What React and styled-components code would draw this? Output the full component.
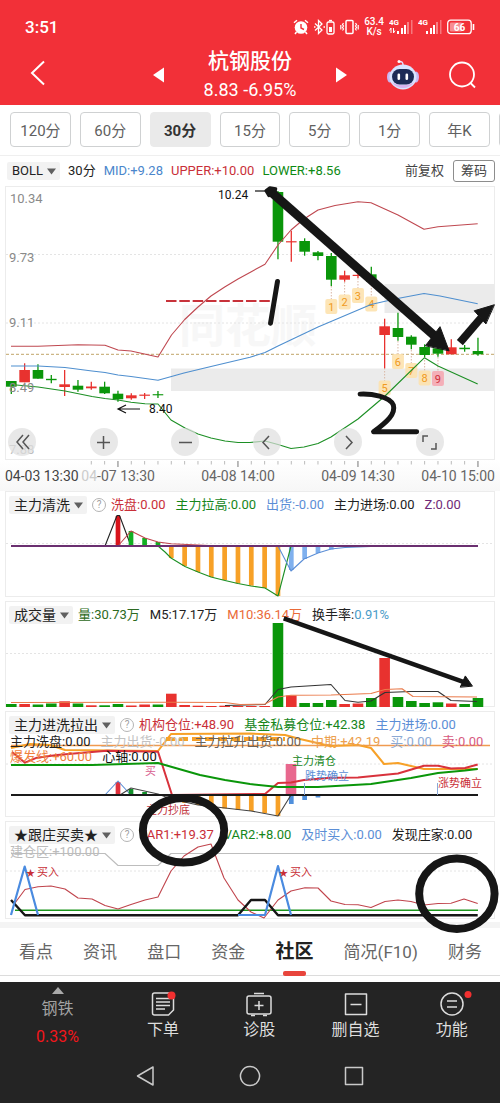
import React from "react";
import styled, { createGlobalStyle } from "styled-components";

const RED = "#e8322f";
const GREEN = "#0a960a";
const ORANGE = "#f7a128";
const BLUE = "#5b8ed6";
const INK = "#161616";

const Global = createGlobalStyle`
  * { box-sizing: border-box; }
  body {
    margin: 0;
    background: #fff;
    color: #222;
    font-family: Roboto, "Noto Sans CJK SC", sans-serif;
  }
  button, select { font: inherit; color: inherit; }
`;

const Page = styled.div`
  width: 100%;
  overflow: hidden;
`;

/* ---------- header ---------- */
const TopArea = styled.header`
  background: #f23038;
  color: #fff;
  padding-bottom: 9px;
`;
const StatusBar = styled.div`
  display: flex;
  align-items: center;
  justify-content: space-between;
  height: 48px;
  padding: 6px 25px 0;
`;
const Clock = styled.time`
  font-size: 17px;
  line-height: 20px;
  font-weight: 500;
`;
const StatusIcons = styled.div`
  display: flex;
  align-items: center;
  gap: 5px;
`;
const Speed = styled.div`
  font-size: 10px;
  line-height: 10px;
  text-align: center;
  font-weight: 500;
`;
const TitleBar = styled.div`
  display: grid;
  grid-template-columns: 1fr 194px 1fr;
  align-items: center;
  padding: 0 24px;
  height: 48px;
`;
const TitleStart = styled.div`
  padding-left: 5px;
`;
const IconButton = styled.button`
  display: inline-flex;
  align-items: center;
  justify-content: center;
  padding: 0;
  border: 0;
  background: none;
  cursor: pointer;
`;
const StockSwitch = styled.div`
  display: flex;
  align-items: center;
  justify-content: space-between;
`;
const StockTitle = styled.div`
  text-align: center;
`;
const StockName = styled.h1`
  margin: 0;
  font-size: 21px;
  line-height: 26px;
  font-weight: 500;
`;
const StockPrice = styled.div`
  font-size: 18px;
  line-height: 24px;
  padding-top: 4px;
  white-space: nowrap;
`;
const TitleActions = styled.div`
  display: flex;
  justify-content: flex-end;
  align-items: center;
  gap: 30px;
`;

/* ---------- period tabs ---------- */
const Periods = styled.nav`
  display: flex;
  gap: 9px;
  padding: 7px 10px 8px;
  border-bottom: 1px solid #efefef;
`;
const Period = styled.button`
  flex: 0 0 calc((100% - 54px) / 7);
  height: 35px;
  padding: 0;
  border: 1px solid ${(p) => (p.$active ? "#eaeaea" : "#cfd1d2")};
  border-radius: 4px;
  background: ${(p) => (p.$active ? "#eaeaea" : "#fff")};
  color: ${(p) => (p.$active ? "#333" : "#606060")};
  font-size: 15px;
  font-weight: ${(p) => (p.$active ? 700 : 400)};
`;

/* ---------- chart area ---------- */
const Charts = styled.main`
  position: relative;
  border-bottom: 6px solid #f4f4f4;
  padding-bottom: 3px;
`;
const BollRow = styled.div`
  display: flex;
  align-items: center;
  gap: 8px;
  height: 30px;
  padding: 0 5px 0 7px;
  font-size: 13px;
  line-height: 18px;
  white-space: nowrap;
`;
const Pill = styled.button`
  display: flex;
  align-items: center;
  gap: 4px;
  height: 18px;
  padding: 0 4px 0 5px;
  border: 0;
  border-radius: 2px;
  background: #f2f2f2;
  color: #222;
  font-size: ${(p) => (p.$latin ? "13px" : "14px")};
  line-height: 18px;
  white-space: nowrap;
`;
const Tools = styled.div`
  display: flex;
  align-items: center;
  gap: 9px;
  margin-left: auto;
  color: #444;
`;
const ChipButton = styled.button`
  width: 42px;
  height: 22px;
  padding: 0;
  border: 1px solid #8d8d8d;
  border-radius: 3px;
  background: #fff;
  font-size: 13px;
  line-height: 18px;
`;
const Panel = styled.section`
  display: grid;
  margin: 0 5px;
  border: 1px solid #ececec;
  & + & { margin-top: 4px; }
  & > * { grid-area: 1 / 1; min-width: 0; }
`;
const Plot = styled.svg`
  display: block;
  width: 100%;
  height: auto;
  overflow: visible;
`;
const Legend = styled.div`
  z-index: 1;
  padding: 4px 0 0 3px;
  font-size: 13px;
  white-space: nowrap;
`;
const LegendRow = styled.div`
  display: flex;
  align-items: center;
  gap: ${(p) => (p.$first ? "5px" : "10px")};
  height: ${(p) => (p.$first ? "18px" : "15px")};
  line-height: ${(p) => (p.$first ? "18px" : "15px")};
  padding-left: ${(p) => (p.$first ? "0" : "1px")};
`;
const Values = styled.div`
  display: flex;
  align-items: baseline;
  gap: 10px;
`;
const Value = styled.span`
  color: ${(p) => p.$color};
`;
const Help = styled.button`
  width: 14px;
  height: 14px;
  padding: 0;
  border: 1px solid #b4b4b4;
  border-radius: 50%;
  background: none;
  color: #a0a0a0;
  font-size: 10px;
  line-height: 12px;
`;
const ZoomTools = styled.div`
  z-index: 1;
  align-self: end;
  display: flex;
  justify-content: space-between;
  padding: 0 50px 3px 2px;
`;
const RoundButton = styled(IconButton)`
  width: 28px;
  height: 28px;
  border-radius: 50%;
  background: rgba(222, 222, 222, 0.7);
`;
const AxisStrip = styled.div`
  background: linear-gradient(#fff, #f7f7f7);
`;
const Marks = styled.svg`
  position: absolute;
  inset: 0;
  width: 100%;
  height: 100%;
  overflow: visible;
  pointer-events: none;
  z-index: 2;
`;

/* ---------- section tabs ---------- */
const Sections = styled.nav`
  display: flex;
  justify-content: space-between;
  align-items: center;
  height: 48px;
  padding: 0 18px 0 19px;
  border-bottom: 1px solid #dcdcdc;
  margin-bottom: 6px;
`;
const SectionLink = styled.a`
  display: flex;
  align-items: center;
  justify-content: center;
  height: 48px;
  color: ${(p) => (p.$active ? "#222" : "#666")};
  font-size: ${(p) => (p.$active ? "19px" : "17px")};
  font-weight: ${(p) => (p.$active ? 700 : 400)};
  line-height: 24px;
  text-decoration: none;
  white-space: nowrap;
  position: relative;
  &::after {
    content: "";
    display: ${(p) => (p.$active ? "block" : "none")};
    position: absolute;
    bottom: 0;
    width: 23px;
    height: 5px;
    border-radius: 2px;
    background: #e8453c;
  }
`;

/* ---------- bottom bars ---------- */
const Bottom = styled.footer`
  background: #242424;
  color: #dedede;
`;
const Actions = styled.div`
  display: flex;
  height: 68px;
`;
const Sector = styled.button`
  flex: 0 0 23%;
  display: flex;
  flex-direction: column;
  align-items: center;
  padding: 5px 0 0;
  border: 0;
  background: none;
  color: #a3a3a3;
  font-size: 16px;
  line-height: 20px;
`;
const SectorName = styled.span`
  padding-top: 5px;
`;
const SectorChange = styled.span`
  padding-top: 8px;
  color: #f3161b;
`;
const Action = styled.button`
  flex: 1;
  display: flex;
  flex-direction: column;
  align-items: center;
  gap: 2px;
  padding: 8px 0 0;
  border: 0;
  background: none;
  color: #dedede;
  font-size: 16px;
  line-height: 20px;
`;
const SystemNav = styled.div`
  display: flex;
  justify-content: center;
  align-items: center;
  gap: 80px;
  height: 53px;
  padding-bottom: 1px;
`;

/* ---------- data ---------- */
const X = (i) => 11.3 + (i * 40) / 3;

// index, colour, body top, body bottom, high, low
const CANDLES = [
  [0, "g", 381, 386.7, 381, 394], [1, "r", 370, 382.3, 363.3, 382.3],
  [2, "g", 370, 378.7, 364.3, 378.7], [3, "g", 378.8, 380.2, 375, 383.3],
  [4, "r", 384.3, 387, 370, 396], [5, "g", 385.7, 389.7, 380, 391.7],
  [6, "r", 386.5, 388.3, 381.7, 389.7], [7, "g", 386.7, 393.3, 381.7, 394],
  [8, "g", 393.7, 399.3, 390.7, 401.7], [9, "r", 395.3, 398.3, 393.3, 399.7],
  [10, "r", 394.6, 395.8, 393, 399], [11, "g", 394.2, 395.3, 391, 398],
  [20, "g", 192, 241.7, 191, 259.3], [21, "r", 241.2, 242.4, 230.7, 261.7],
  [22, "g", 241, 251.7, 238.3, 255.7], [23, "g", 252.3, 256, 251, 260.3],
  [24, "g", 256, 279.7, 253, 286], [25, "r", 275.3, 279.7, 270.7, 281.7],
  [26, "r", 274.8, 276, 273, 278], [27, "g", 274.3, 281.7, 266.7, 281.7],
  [28, "r", 326.3, 335, 318.7, 368.3], [29, "g", 328, 337, 312.7, 340.7],
  [30, "g", 336.7, 344.7, 335.3, 349.3], [31, "g", 347, 355, 344.3, 357],
  [32, "g", 348.3, 353.7, 335, 356.7], [33, "r", 347.3, 354.3, 339.3, 354.3],
  [34, "g", 347.7, 349.2, 345, 351.7], [35, "g", 351, 354.3, 337.7, 355.7],
];
const UPPER = "11,346.3 38,346.3 78,344.7 105,345.3 118,350 131,351 158,357 171.5,335 184.7,319.5 198,307 211,296 224.7,287 238,279 251.3,271.7 265,264.3 278,245 291,230 304,219 318,210 335,205.5 358,201.7 371,202.7 398,215 424,229.3 438,226.7 477.7,223.7";
const MID = "11,366 38,366 65,367.5 92,371 105,372.5 118,375 131,376.5 158,380.3 184,373 211,366.5 250,357.3 265,352.5 278,346 318,327 371,304.5 395,299 424,293.5 440,296 477.7,303.7";
const LOWER = "11,384.5 38,387 65,391 92,396.5 105,398.5 118,400 131,402.3 145,403.7 158,404 171,420 185,428 198,434 211,438 225,441 238,442.5 250,442.5 265,441 278,444.5 291,448.5 304,447 318,443.5 331,437 358,419 385,396 424.5,357.7 438,366 477.7,384";

// index, badge centre, start of the dotted lead line
const COUNTS = [
  [24, 306.5, 286], [25, 302, 282], [26, 295.5, 278], [27, 304, 282],
  [28, 388, 368], [29, 361.5, 341], [30, 370.5, 350], [31, 378, 357], [32, 378.5, 357],
];

const VOLUME = [
  "g704", "r704", "g704.5", "g703.5", "r701.3", "g703.5", "r705.3", "g705.3", "g704",
  "r705.5", "r704.5", "g704.5", "r693.7", "r705", "r705.7", "r706", "r705.7", "r706",
  "r706", "r706", "g623", "r695.5", "g703", "g703", "g700", "r704", "r703.5", "g698",
  "r658", "g697", "g701", "g703", "g702.3", "r703.5", "g704", "g698",
];
const WASH = [558, 566, 572, 577, 580, 583.5, 585.7, 588, 596];
const PULL = [800, 803, 805, 807.5, 808.5, 810, 811, 813, 816];

const TICKS = Array.from({ length: 30 }, (_, k) => k + 6);

/* ---------- small parts ---------- */
const Line = ({ pts, c, w = 1.1, o = 1 }) => (
  <polyline points={pts} fill="none" stroke={c} strokeWidth={w} strokeLinejoin="round" opacity={o} />
);
const Bar = ({ x, w = 4.7, top, bottom, c }) => (
  <rect x={x - w / 2} y={top} width={w} height={bottom - top} fill={c} />
);
const Grid = ({ y }) => (
  <line x1="6" x2="494" y1={y} y2={y} stroke="#e4e4e4" strokeDasharray="2 2" />
);
const Caret = () => (
  <svg width="9" height="7" viewBox="0 0 9 7" aria-hidden="true">
    <path d="M0 0.5h9L4.5 6.5z" fill="#606060" />
  </svg>
);
const Indicator = ({ name, help, values, children }) => (
  <Legend>
    <LegendRow $first>
      <Pill>{name}<Caret /></Pill>
      {help && <Help aria-label="说明">?</Help>}
      <Values>
        {values.map(([text, color, label]) => (
          <Value key={text} $color={color}>
            {label && <Value $color="#222">{label}</Value>}
            {text}
          </Value>
        ))}
      </Values>
    </LegendRow>
    {children}
  </Legend>
);
const Bars4G = ({ arrows }) => (
  <svg width="24" height="18" viewBox="0 0 24 18" fill="#fff">
    <text x="0" y="7" fontSize="8" fontWeight="700">4G</text>
    {arrows && <path d="M2 10v5M4.500 10v5M.5 12.500l1.500-2.500M6 12.500L4.500 15" stroke="#fff" strokeWidth="1" />}
    <rect x="8" y="13" width="2" height="3" />
    <rect x="12" y="10" width="2" height="6" />
    <rect x="15" y="7" width="2" height="9" />
    <rect x="18" y="4" width="2" height="12" opacity=".4" />
    <rect x="22" y="2" width="1.500" height="14" opacity=".35" />
  </svg>
);

function Status() {
  return (
    <StatusBar>
      <Clock>3:51</Clock>
      <StatusIcons>
        <svg width="16" height="16" viewBox="0 0 16 16">
          <circle cx="8" cy="8.500" r="6.300" fill="#fff" />
          <path d="M8 5v4l3 1.500" fill="none" stroke="#f23038" strokeWidth="1.400" />
          <path d="M1 3.800L4 1.200M15 3.800L12 1.200M3.500 13l-1.500 2M12.500 13l1.500 2" stroke="#fff" strokeWidth="1.500" />
        </svg>
        <svg width="21" height="16" viewBox="0 0 21 16" fill="none" stroke="#fff" strokeWidth="1.300">
          <path d="M1 4.500l7 6.500-3.500 3.500v-13L8 5 1 11.500" />
          <path d="M9.500 8h1.500M0 8h1.500" />
          <rect x="13" y="3" width="7" height="12" rx="1.500" />
          <path d="M15 1.500h3" />
          <rect x="15" y="8" width="3" height="5" fill="#fff" stroke="none" />
        </svg>
        <svg width="19" height="16" viewBox="0 0 19 16" fill="none" stroke="#fff" strokeWidth="1.500">
          <rect x="6" y="1.500" width="7" height="13" rx="1" />
          <path d="M3.500 4l-1 1.500 1 1.500-1 1.500 1 1.500-1 1.500M15.500 4l1 1.500-1 1.500 1 1.500-1 1.500 1 1.500M.8 6v4.500M18.200 6v4.500" strokeWidth="1.200" />
        </svg>
        <Speed>63.4<br />K/s</Speed>
        <Bars4G arrows />
        <Bars4G />
        <svg width="28" height="16" viewBox="0 0 28 16">
          <rect x=".7" y="1.200" width="23.500" height="13.500" rx="3" fill="none" stroke="#fff" strokeWidth="1.300" />
          <rect x="3" y="3.500" width="12" height="9" rx="1" fill="#fff" opacity=".45" />
          <path d="M26.500 5v6" stroke="#fff" strokeWidth="1.600" />
          <text x="12.500" y="11.800" fontSize="10" fontWeight="700" fill="#fff" textAnchor="middle">66</text>
        </svg>
      </StatusIcons>
    </StatusBar>
  );
}

function MainChart() {
  return (
    <Panel>
      <Plot viewBox="6 187 488 272" role="img" aria-label="30分钟K线">
        <text x="179" y="342" fontSize="46" fontWeight="700" fill="#f7f7f7">同花顺</text>
        <rect x="171" y="368.500" width="323" height="22.500" fill="#ebebeb" />
        <rect x="384.500" y="284" width="109.500" height="29" fill="#ebebeb" />
        <Grid y={254.5} />
        <Grid y={323} />
        <line x1="6" x2="494" y1="354.300" y2="354.300" stroke="#c0a468" strokeDasharray="3 2" />
        <line x1="166" x2="270" y1="301" y2="301" stroke="#c8323a" strokeWidth="1.800" strokeDasharray="10.500 2.830" />
        {COUNTS.map(([i, y, from]) => (
          <line key={i} x1={X(i)} x2={X(i)} y1={from} y2={y - 7} stroke="#d9b6a4" strokeDasharray="1.500 1.500" />
        ))}
        {CANDLES.map(([i, k, top, bottom, high, low]) => {
          const c = k === "g" ? GREEN : RED;
          return (
            <g key={i}>
              <line x1={X(i)} x2={X(i)} y1={high} y2={low} stroke={c} strokeWidth="1.300" />
              <Bar x={X(i)} w={10.6} top={top} bottom={bottom} c={c} />
            </g>
          );
        })}
        {COUNTS.map(([i, y], k) => (
          <g key={i}>
            <rect x={X(i) - 6} y={y - 7.5} width="12" height="15" rx="2" fill={k === 8 ? "#f5a9b2" : "#fde2ae"} opacity=".9" />
            <text x={X(i)} y={y + 4} fontSize="11" textAnchor="middle" fill={k === 8 ? "#d0303c" : "#f09a1e"}>{k + 1}</text>
          </g>
        ))}
        <Line pts={UPPER} c="#bf4850" />
        <Line pts={MID} c="#4f8fcf" />
        <Line pts={LOWER} c="#1c8f24" />
        <g fontSize="13" fill="#8a8a8a">
          <text x="10" y="203">10.34</text>
          <text x="9" y="262">9.73</text>
          <text x="9" y="327">9.11</text>
          <text x="9" y="392">8.49</text>
          <text x="9" y="454" fill="#bdbdbd">7.88</text>
        </g>
        <g fontSize="12" fill="#111">
          <text x="218" y="199">10.24</text>
          <text x="149" y="413">8.40</text>
        </g>
        <path d="M140 409h-22m8-4l-8 4 8 4" fill="none" stroke="#111" strokeWidth="1.200" />
        <path d="M255 191h22" stroke="#111" strokeWidth="1.200" />
      </Plot>
      <ZoomTools>
        {[
          ["最早", "M9 1L3 8l6 7M15 1L9 8l6 7"],
          ["放大", "M8.500 2v13M2 8.500h13"],
          ["缩小", "M2 8.500h13"],
          ["向左", "M11 2L5 8.500l6 6.500"],
          ["向右", "M6 2l6 6.500L6 15"],
          ["全屏", "M2 8V2h5M15 9v6h-5"],
        ].map(([label, d]) => (
          <RoundButton key={label} aria-label={label}>
            <svg width="17" height="17" viewBox="0 0 17 17" fill="none" stroke="#555" strokeWidth="1.500">
              <path d={d} />
            </svg>
          </RoundButton>
        ))}
      </ZoomTools>
    </Panel>
  );
}

function TimeAxis() {
  return (
    <AxisStrip>
      <Plot viewBox="0 460 500 31" role="img" aria-label="时间轴">
        {TICKS.map((i) => {
          const major = (i - 8) % 9 === 0;
          return (
            <line key={i} x1={X(i)} x2={X(i)} y1="461" y2={major ? 467 : 464.5} stroke={major ? "#777" : "#bbb"} />
          );
        })}
        <g fontSize="14" fill="#666">
          <text x="5" y="481" fill="#444">04-03 13:30</text>
          <text x="155" y="481" textAnchor="end"><tspan fill="#ccc">04</tspan>-07 13:30</text>
          <text x="238" y="481" textAnchor="middle">04-08 14:00</text>
          <text x="358" y="481" textAnchor="middle">04-09 14:30</text>
          <text x="495" y="481" textAnchor="end">04-10 15:00</text>
        </g>
      </Plot>
    </AxisStrip>
  );
}

function WashPanel() {
  return (
    <Panel>
      <Plot viewBox="6 492 488 104" role="img" aria-label="主力清洗">
        <Grid y={543.5} />
        <Bar x={118} top={516} bottom={546} c="#d8141c" />
        <Line pts="105,546 117,515.5 119.500,515.5 131,546" c="#222" />
        {[[131, 531], [144.6, 538], [158, 542]].map(([x, y]) => <Bar key={x} x={x} top={y} bottom={546} c="#12b022" />)}
        {WASH.map((y, k) => <Bar key={k} x={X(12 + k)} top={546} bottom={y} c={ORANGE} />)}
        {[570, 559, 553, 549.5].map((y, k) => <Bar key={k} x={X(21 + k)} top={546} bottom={y} c="#7fb0ee" />)}
        <Line pts="118,546 131,531 145,538 158,542 171,543.700 198,545 220,546" c="#c0444c" />
        <Line pts="158,546 165,552 171,558 185,566.500 198,572 211,577 225,580.500 238,583.500 251,586 265,588 278,596 291,546" c="#1c8f24" />
        <Line pts="278,546 291,571 304,559 318,553 331,549 345,547.500 371,546.500" c={BLUE} />
        <line x1="11" x2="478" y1="546" y2="546" stroke="#6b3070" strokeWidth="1.800" />
      </Plot>
      <Indicator name="主力清洗" help values={[
        ["洗盘:0.00", "#c92f38"], ["主力拉高:0.00", "#16861b"], ["出货:-0.00", BLUE],
        ["主力进场:0.00", "#222"], ["Z:0.00", "#702a78"],
      ]} />
    </Panel>
  );
}

function VolumePanel() {
  return (
    <Panel>
      <Plot viewBox="6 602 488 104" role="img" aria-label="成交量">
        <Grid y={653.5} />
        {VOLUME.map((v, i) => (
          <Bar key={i} x={X(i)} w={10.6} top={Number(v.slice(1))} bottom={707} c={v[0] === "g" ? GREEN : RED} />
        ))}
        <Line pts="225,705.500 265,704.500 278,689.500 291,687 331,684.500 345,700.500 358,702.300 371,701 385,692.500 411,691.500 438,691.500 451,700.500 477,701.500" c="#333" />
        <Line pts="11,702.500 171,702.300 225,702.500 240,704.500 265,704 278,697 291,695.300 331,695 371,693.500 385,689.500 402,688.700 413,696.500 477,697" c="#ea7a4a" />
      </Plot>
      <Indicator name="成交量" values={[
        ["量:30.73万", "#2d6a22"], ["M5:17.17万", "#222"], ["M10:36.14万", "#ea6a38"],
        ["0.91%", "#4a9cc8", "换手率:"],
      ]} />
    </Panel>
  );
}

function PullPanel() {
  return (
    <Panel>
      <Plot viewBox="6 712 488 104" role="img" aria-label="主力进洗拉出">
        <Grid y={764} />
        <Bar x={118} top={782} bottom={795} c="#e0303c" />
        <Line pts="105,795 118,781 129,793" c={BLUE} />
        <Bar x={131} top={789} bottom={795} c="#12902a" />
        <Bar x={144.6} top={792} bottom={795} c="#12902a" />
        {PULL.map((y, k) => <Bar key={k} x={X(12 + k)} top={795} bottom={y} c={ORANGE} />)}
        {[804, 800, 797.5].map((y, k) => <Bar key={k} x={X(21 + k)} top={795} bottom={y} c="#4f8fdc" />)}
        <Line pts="120,795 131,788 158,794 171,799 198,805 225,808 251,811 278,816 291,795" c="#444" />
        <Bar x={291} w={10.6} top={764} bottom={795} c="#e8688e" />
        <line x1="11" x2="490" y1="745.500" y2="745.500" stroke="#f09a50" strokeWidth="1.500" />
        <line x1="166" x2="285" y1="739" y2="739" stroke={ORANGE} strokeWidth="4" strokeDasharray="9 4" />
        <Line pts="11,748 30,744 50,745 65,750 158,751 171,734 250,733.500 285,735 300,739 330,746 358,745 371,748 384,764 398,763 411,766 424,769 477.700,769" c={ORANGE} w={2} />
        <Line pts="12,752 25,762.700 37,757.700 57,755 80,753 107,750.700 158,751.700 172,795 265,794 278,783 291,782.500 304,780 331,777.700 358,777.500 398,773.500 424,765.700 438,765.700 451,768.500 465,768 477.700,764.500" c="#d8323c" w={2} />
        <Line pts="11,765 92,765 158,763 172,767 200,775 225,780 250,784 278,787 318,787 371,784 411,778 438,773 465,770.500 477.700,769" c={GREEN} w={2} />
        <line x1="11" x2="478" y1="795" y2="795" stroke="#1a1a1a" strokeWidth="1.800" />
        <path d="M304.500 783v12M437.500 783v12" stroke="#8aa8d8" strokeWidth="1" />
        <g fontSize="11">
          <text x="145" y="775" fill="#d86090">买</text>
          <text x="146" y="814" fill="#c02f38">主力抄底</text>
          <text x="292" y="765" fill="#16861b">主力清仓</text>
          <text x="305" y="780" fill={BLUE}>跌势确立</text>
          <text x="438" y="787" fill="#c92f38">涨势确立</text>
        </g>
      </Plot>
      <Indicator name="主力进洗拉出" help values={[
        ["机构仓位:+48.90", "#c92f38"], ["基金私募仓位:+42.38", "#16861b"], ["主力进场:0.00", BLUE],
      ]}>
        <LegendRow>
          <Value $color="#222">主力洗盘:0.00</Value>
          <Value $color="#c2c2c2">主力出货:-0.00</Value>
          <Value $color="#6a6258">主力拉升出货:0.00</Value>
          <Value $color="#eca04e">中期:+42.19</Value>
          <Value $color="#8ba9d4">买:0.00</Value>
          <Value $color="#d75a80">卖:0.00</Value>
        </LegendRow>
        <LegendRow>
          <Value $color="#f0803c">爆发线:+60.00</Value>
          <Value $color="#111">心轴:0.00</Value>
        </LegendRow>
      </Indicator>
    </Panel>
  );
}

function FollowPanel() {
  return (
    <Panel>
      <Plot viewBox="6 822 488 96" role="img" aria-label="跟庄买卖">
        <Grid y={871} />
        <Line pts="11,853.500 105,853.500 118,865.500 158,865.500 171,853.500 477.700,853.500" c="#bdbdbd" />
        <line x1="15" x2="478" y1="910.300" y2="910.300" stroke="#1c961c" strokeWidth="1.400" />
        <Line pts="15,903 25,889.500 38,886.700 51,886 65,889 78,898 92,899 105,905.500 118,909 131,904.500 145,900 158,897 171,871 184,856 198,847 211,844 224,878 238,900 251,912 264,918 278,900 291,891 305,887.700 318,888 331,901 345,904.500 358,904.700 371,907.500 385,901.500 398,900 411,901.500 424,905 438,903.500 451,903.300 464,899 477.700,903.500" c="#c0444c" />
        <Line pts="11,900 25,915.300 238,915.300 251,900 265,900 278,915.300 477.700,915.300" c="#161616" w={2.4} />
        <Line pts="11,915 24.700,866.500 38,915" c="#4a8be0" w={2.2} />
        <Line pts="238,915 265,915 278,866 291,915" c="#4a8be0" w={2.2} />
        <g fontSize="11" fill="#c92f38">
          <text x="26" y="876"><tspan fontSize="9">★</tspan></text>
          <text x="37" y="876">买入</text>
          <text x="279" y="876"><tspan fontSize="9">★</tspan></text>
          <text x="290" y="876">买入</text>
        </g>
      </Plot>
      <Indicator name="★跟庄买卖★" help values={[
        ["VAR1:+19.37", "#c92f38"], ["VAR2:+8.00", "#16861b"], ["及时买入:0.00", BLUE], ["发现庄家:0.00", "#222"],
      ]}>
        <LegendRow><Value $color="#bcbcbc">建仓区:+100.00</Value></LegendRow>
      </Indicator>
    </Panel>
  );
}

function Drawings() {
  return (
    <Marks viewBox="0 156 500 772" aria-hidden="true" fill="none" stroke={INK} strokeLinecap="round" strokeLinejoin="round">
      <path d="M272 193L438 339" strokeWidth="9" strokeLinecap="butt" />
      <path d="M266 191l4-3 6 1-2 4-5 3z" strokeWidth="3" fill={INK} />
      <path d="M450.500 352L441.500 328 427 347z" fill={INK} strokeWidth="1" />
      <path d="M461.500 344L483 319" strokeWidth="8" strokeLinecap="butt" />
      <path d="M496 306L476 312 487.500 325z" fill={INK} strokeWidth="1" />
      <path d="M277.700 282.500L270.700 324.500" strokeWidth="5" />
      <path d="M361 396C372 395.500 391 398 394.500 407C397 416 388 424 374.500 434H418" strokeWidth="5" />
      <path d="M284 622L465 686" strokeWidth="4.500" strokeLinecap="butt" />
      <path d="M474 690L467 680 462 691z" fill={INK} strokeWidth="1" />
      <ellipse cx="183" cy="835.500" rx="41" ry="32.500" strokeWidth="8" />
      <ellipse cx="458.500" cy="899.500" rx="38" ry="35.500" strokeWidth="8" />
    </Marks>
  );
}

const PERIODS = ["120分", "60分", "30分", "15分", "5分", "1分", "年K"];
const SECTIONS = ["看点", "资讯", "盘口", "资金", "社区", "简况(F10)", "财务"];

const ActionIcon = ({ children }) => (
  <svg width="44" height="28" viewBox="0 0 44 28" fill="none" stroke="#dcdcdc" strokeWidth="1.500" strokeLinejoin="round" aria-hidden="true">
    {children}
  </svg>
);

export default function App() {
  return (
    <Page>
      <Global />
      <TopArea>
        <Status />
        <TitleBar>
          <TitleStart>
            <IconButton aria-label="返回">
              <svg width="17" height="26" viewBox="0 0 17 26" fill="none" stroke="#fff" strokeWidth="2">
                <path d="M15 1.500L3 13l12 11.500" />
              </svg>
            </IconButton>
          </TitleStart>
          <StockSwitch>
            <IconButton aria-label="上一只">
              <svg width="12" height="16" viewBox="0 0 12 16"><path d="M11 .5v15L0 8z" fill="#fff" /></svg>
            </IconButton>
            <StockTitle>
              <StockName>杭钢股份</StockName>
              <StockPrice>8.83 -6.95%</StockPrice>
            </StockTitle>
            <IconButton aria-label="下一只">
              <svg width="12" height="16" viewBox="0 0 12 16"><path d="M1 .5v15L12 8z" fill="#fff" /></svg>
            </IconButton>
          </StockSwitch>
          <TitleActions>
            <IconButton aria-label="智能助手">
              <svg width="32" height="32" viewBox="0 0 32 32">
                <path d="M16 6c0-3-1-3.500-3.500-3.500" fill="none" stroke="#e5dcff" strokeWidth="1.500" />
                <circle cx="12" cy="2.500" r="1.500" fill="#fff" />
                <ellipse cx="3" cy="18" rx="3" ry="5.500" fill="#c9b8f2" />
                <ellipse cx="29" cy="18" rx="3" ry="5.500" fill="#c9b8f2" />
                <ellipse cx="16" cy="18" rx="13.500" ry="12.500" fill="#d9e4ff" />
                <path d="M5 23c5 8 17 8 22 0-4 4-18 4-22 0z" fill="#d7b3ee" />
                <rect x="5" y="10" width="22" height="15.500" rx="7.700" fill="#1d2b56" />
                <rect x="10.500" y="14.500" width="2.600" height="6.500" rx="1.300" fill="#fff" />
                <rect x="18.500" y="14.500" width="2.600" height="6.500" rx="1.300" fill="#fff" />
              </svg>
            </IconButton>
            <IconButton aria-label="搜索">
              <svg width="27" height="28" viewBox="0 0 27 28" fill="none" stroke="#fff" strokeWidth="1.800">
                <circle cx="13" cy="13.500" r="12" />
                <path d="M21.500 22l4.500 4.500" />
              </svg>
            </IconButton>
          </TitleActions>
        </TitleBar>
      </TopArea>

      <Periods>
        {PERIODS.map((p) => <Period key={p} $active={p === "30分"}>{p}</Period>)}
        <Period aria-label="更多" />
      </Periods>

      <Charts>
        <BollRow>
          <Pill $latin>BOLL<Caret /></Pill>
          <Value $color="#222">30分</Value>
          <Value $color="#4a86cc">MID:+9.28</Value>
          <Value $color="#c92f38">UPPER:+10.00</Value>
          <Value $color="#0d8a12">LOWER:+8.56</Value>
          <Tools>
            <span>前复权</span>
            <ChipButton>筹码</ChipButton>
          </Tools>
        </BollRow>
        <MainChart />
        <TimeAxis />
        <WashPanel />
        <VolumePanel />
        <PullPanel />
        <FollowPanel />
        <Drawings />
      </Charts>

      <Sections>
        {SECTIONS.map((s) => <SectionLink key={s} href="#" $active={s === "社区"}>{s}</SectionLink>)}
      </Sections>

      <Bottom>
        <Actions>
          <Sector>
            <svg width="12" height="7" viewBox="0 0 12 7"><path d="M6 0l6 7H0z" fill="#aaa" /></svg>
            <SectorName>钢铁</SectorName>
            <SectorChange>0.33%</SectorChange>
          </Sector>
          <Action>
            <ActionIcon>
              <path d="M13.500 3h17a2 2 0 0 1 2 2v15l-5 5h-14a2 2 0 0 1-2-2V5a2 2 0 0 1 2-2zM15 8.500h14M15 12h14M15 15.500h14M15 19h9" />
              <circle cx="30.500" cy="5.500" r="4" fill="#f23030" stroke="none" />
            </ActionIcon>
            下单
          </Action>
          <Action>
            <ActionIcon>
              <rect x="10" y="6" width="24" height="18" rx="2" />
              <path d="M17 3.500h10M22 11v9M17.500 15.500h9M14 25.500h4M26 25.500h4" />
            </ActionIcon>
            诊股
          </Action>
          <Action>
            <ActionIcon>
              <rect x="11.500" y="4" width="21" height="20.500" />
              <path d="M16.500 14.500h11" />
            </ActionIcon>
            删自选
          </Action>
          <Action>
            <ActionIcon>
              <circle cx="22" cy="14" r="11" />
              <path d="M17 11h10M17 17h10" />
              <circle cx="38" cy="4.500" r="3.500" fill="#f23030" stroke="none" />
            </ActionIcon>
            功能
          </Action>
        </Actions>
        <SystemNav>
          {[
            ["系统返回", "M19 3v18L3.500 12z"],
            ["主屏幕", "M12 2.500a9.500 9.500 0 1 0 .01 0z"],
            ["最近任务", "M3.500 3.500h17v17h-17z"],
          ].map(([label, d]) => (
            <IconButton key={label} aria-label={label}>
              <svg width="24" height="24" viewBox="0 0 24 24" fill="none" stroke="#c9c9c9" strokeWidth="1.500" strokeLinejoin="round">
                <path d={d} />
              </svg>
            </IconButton>
          ))}
        </SystemNav>
      </Bottom>
    </Page>
  );
}
